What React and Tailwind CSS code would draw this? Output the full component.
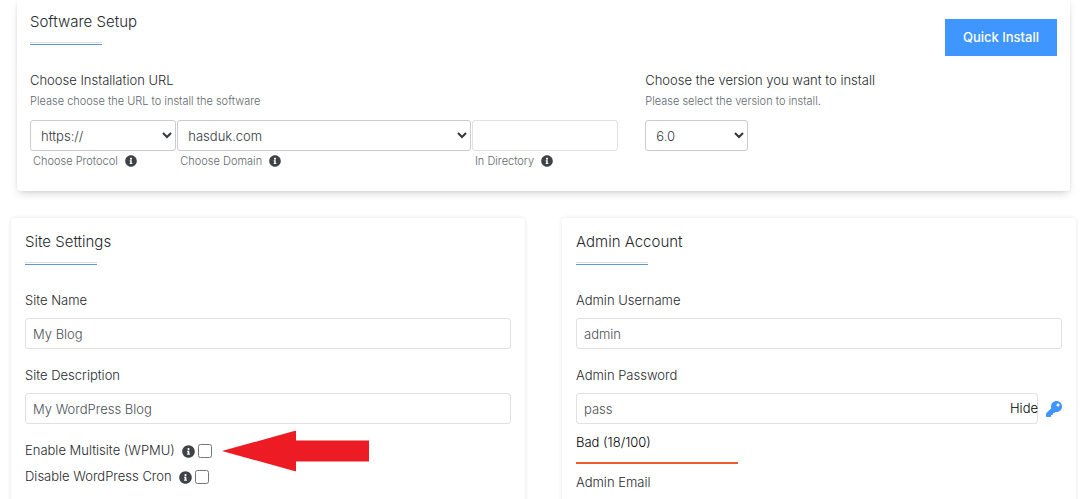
import { useState } from "react";
import { FaInfoCircle, FaKey } from "react-icons/fa";

const inputClass =
  "h-[31px] w-full rounded-[3px] border border-[#dfe1e4] bg-white px-[7px] text-[13px] text-[#4b5056] outline-none focus:border-[#4096ff]";
const selectClass =
  "h-[31px] rounded-[3px] border border-[#c9ccd1] bg-white px-[6px] text-[13px] text-[#33383d] outline-none focus:border-[#4096ff]";

function SectionTitle({ children }) {
  return (
    <div>
      <h2 className="text-[15px] leading-6 text-[#26292c]">{children}</h2>
      <div className="mt-2 h-[3px] w-[72px] border-t border-b border-t-[#dcdfe2] border-b-[#5b95d6]"></div>
    </div>
  );
}

function Caption({ htmlFor, children }) {
  return (
    <label htmlFor={htmlFor} className="flex items-center gap-[7px] pl-[3px] text-[11px] leading-5 text-[#62686e]">
      {children}
      <FaInfoCircle className="size-3 text-[#3f4347]" />
    </label>
  );
}

function TextField({ id, label, value, onChange }) {
  return (
    <div>
      <label htmlFor={id} className="mb-2 block leading-5">
        {label}
      </label>
      <input id={id} type="text" value={value} onChange={(e) => onChange(e.target.value)} className={inputClass} />
    </div>
  );
}

function CheckField({ id, label, children }) {
  return (
    <div className="relative flex h-[26px] w-fit items-center gap-[3px]">
      <label htmlFor={id} className="flex items-center gap-[7px]">
        {label}
        <FaInfoCircle className="size-[13px] text-[#3f4347]" />
      </label>
      <input id={id} type="checkbox" className="size-[14px]" />
      {children}
    </div>
  );
}

export default function App() {
  const [directory, setDirectory] = useState("");
  const [siteName, setSiteName] = useState("My Blog");
  const [siteDescription, setSiteDescription] = useState("My WordPress Blog");
  const [username, setUsername] = useState("admin");
  const [password, setPassword] = useState("pass");
  const [email, setEmail] = useState("");
  const [showPassword, setShowPassword] = useState(true);

  return (
    <div className="flex h-screen flex-col overflow-hidden bg-white font-[Inter,sans-serif] text-[13px] font-light text-[#26292c]">
      <section className="mx-[17px] shrink-0 rounded-b pt-[10px] pb-5 shadow-[0_4px_8px_-2px_rgba(0,0,0,0.18),0_0_3px_rgba(0,0,0,0.06)]">
        <div className="flex items-start justify-between px-[13px]">
          <SectionTitle>Software Setup</SectionTitle>
          <button type="button" className="mt-[9px] h-[37px] bg-[#4096ff] px-[18px] font-medium text-white">
            Quick Install
          </button>
        </div>

        <div className="mt-[14px] grid grid-cols-12">
          <div className="col-span-7 px-[13px]">
            <h3 className="leading-[21px]">Choose Installation URL</h3>
            <p className="mb-[9px] text-[11px] leading-5 text-[#62686e]">Please choose the URL to install the software</p>
            <div className="grid grid-cols-4 gap-px">
              <div>
                <select id="protocol" className={`${selectClass} w-full`}>
                  <option>https://</option>
                  <option>http://</option>
                </select>
                <Caption htmlFor="protocol">Choose Protocol</Caption>
              </div>
              <div className="col-span-2">
                <select id="domain" className={`${selectClass} w-full`}>
                  <option>hasduk.com</option>
                </select>
                <Caption htmlFor="domain">Choose Domain</Caption>
              </div>
              <div>
                <input
                  id="directory"
                  type="text"
                  value={directory}
                  onChange={(e) => setDirectory(e.target.value)}
                  className={inputClass}
                />
                <Caption htmlFor="directory">In Directory</Caption>
              </div>
            </div>
          </div>

          <div className="col-span-5 px-[14px]">
            <label htmlFor="version" className="block leading-[21px]">
              Choose the version you want to install
            </label>
            <p className="mb-[9px] text-[11px] leading-5 text-[#62686e]">Please select the version to install.</p>
            <select id="version" className={`${selectClass} w-[103px]`}>
              <option>6.0</option>
            </select>
          </div>
        </div>
      </section>

      <div className="mx-[11px] mt-[27px] grid min-h-0 flex-1 grid-cols-2 gap-[37px]">
        <section className="rounded-t px-[14px] pt-3 shadow-[0_0_4px_rgba(0,0,0,0.1)]">
          <SectionTitle>Site Settings</SectionTitle>
          <div className="mt-[25px] space-y-4">
            <TextField id="site-name" label="Site Name" value={siteName} onChange={setSiteName} />
            <TextField
              id="site-description"
              label="Site Description"
              value={siteDescription}
              onChange={setSiteDescription}
            />
          </div>
          <div className="mt-[14px]">
            <CheckField id="multisite" label="Enable Multisite (WPMU)">
              <svg
                viewBox="0 0 147 41"
                className="absolute top-1/2 left-full ml-[10px] h-[41px] w-[147px] -translate-y-1/2"
                aria-hidden="true"
              >
                <path d="M0 20.5 74 0v10h73v21H74v10z" fill="#ed1c24" />
              </svg>
            </CheckField>
            <CheckField id="cron" label="Disable WordPress Cron" />
          </div>
        </section>

        <section className="rounded-t px-[14px] pt-3 shadow-[0_0_4px_rgba(0,0,0,0.1)]">
          <SectionTitle>Admin Account</SectionTitle>
          <div className="mt-[25px] space-y-4">
            <TextField id="username" label="Admin Username" value={username} onChange={setUsername} />
            <div>
              <label htmlFor="password" className="mb-2 block leading-5">
                Admin Password
              </label>
              <div className="flex items-center gap-2">
                <div className="relative flex-1">
                  <input
                    id="password"
                    type={showPassword ? "text" : "password"}
                    value={password}
                    onChange={(e) => setPassword(e.target.value)}
                    className={inputClass}
                  />
                  <button
                    type="button"
                    onClick={() => setShowPassword(!showPassword)}
                    className="absolute inset-y-0 right-0 text-black"
                  >
                    {showPassword ? "Hide" : "Show"}
                  </button>
                </div>
                <button type="button" aria-label="Generate password">
                  <FaKey className="size-4 text-[#4096ff]" />
                </button>
              </div>
            </div>
          </div>
          <p className="mt-2 leading-5 text-black">Bad (18/100)</p>
          <div className="mt-[10px] mb-2 h-[2px] w-1/3 bg-[#ed5c31]"></div>
          <TextField id="email" label="Admin Email" value={email} onChange={setEmail} />
        </section>
      </div>
    </div>
  );
}
